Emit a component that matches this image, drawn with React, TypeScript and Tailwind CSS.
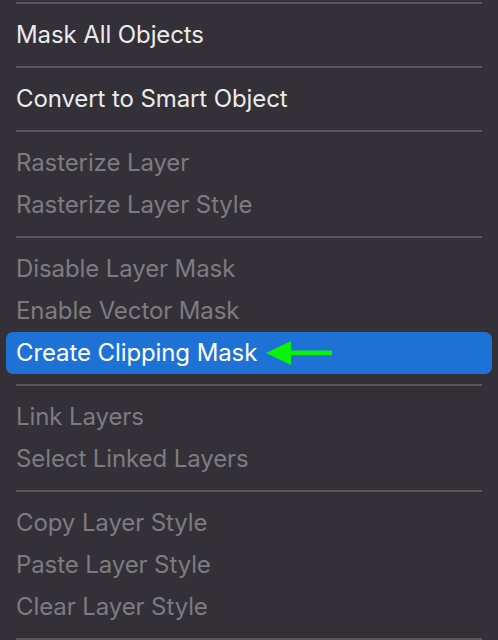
const sections: { label: string; disabled?: boolean; active?: boolean }[][] = [
  [{ label: "Mask All Objects" }],
  [{ label: "Convert to Smart Object" }],
  [
    { label: "Rasterize Layer", disabled: true },
    { label: "Rasterize Layer Style", disabled: true },
  ],
  [
    { label: "Disable Layer Mask", disabled: true },
    { label: "Enable Vector Mask", disabled: true },
    { label: "Create Clipping Mask", active: true },
  ],
  [
    { label: "Link Layers", disabled: true },
    { label: "Select Linked Layers", disabled: true },
  ],
  [
    { label: "Copy Layer Style", disabled: true },
    { label: "Paste Layer Style", disabled: true },
    { label: "Clear Layer Style", disabled: true },
  ],
];

function Arrow() {
  return (
    <svg width="68" height="26" viewBox="0 0 68 26" className="ml-[9px] shrink-0">
      <polygon points="0,13 25,1 25,25" fill="#0af20a" />
      <rect x="24" y="10.5" width="42" height="4.5" fill="#0af20a" />
    </svg>
  );
}

function Divider({ first }: { first?: boolean }) {
  return (
    <div
      className={`${first ? "mt-[2px]" : "mt-[10px]"} mb-[10px] mx-4 h-[2px] bg-[#59575c]`}
    />
  );
}

export default function App() {
  return (
    <div
      className="w-[498px] h-[640px] overflow-hidden bg-[#333137] text-[24px] tracking-[-0.1px]"
      style={{ fontFamily: "Inter, 'Noto Sans', sans-serif" }}
    >
      <Divider first />
      {sections.map((items, i) => (
        <div key={i}>
          {items.map((item) =>
            item.active ? (
              <div
                key={item.label}
                className="mx-[6px] h-[42px] rounded-[7px] bg-[#1f72d5] px-[10px] flex items-center text-white"
              >
                <span>{item.label}</span>
                <Arrow />
              </div>
            ) : (
              <div
                key={item.label}
                className={`h-[42px] px-4 flex items-center ${
                  item.disabled ? "text-[#7d7b80]" : "text-[#ebebed]"
                }`}
              >
                {item.label}
              </div>
            )
          )}
          <Divider />
        </div>
      ))}
    </div>
  );
}
